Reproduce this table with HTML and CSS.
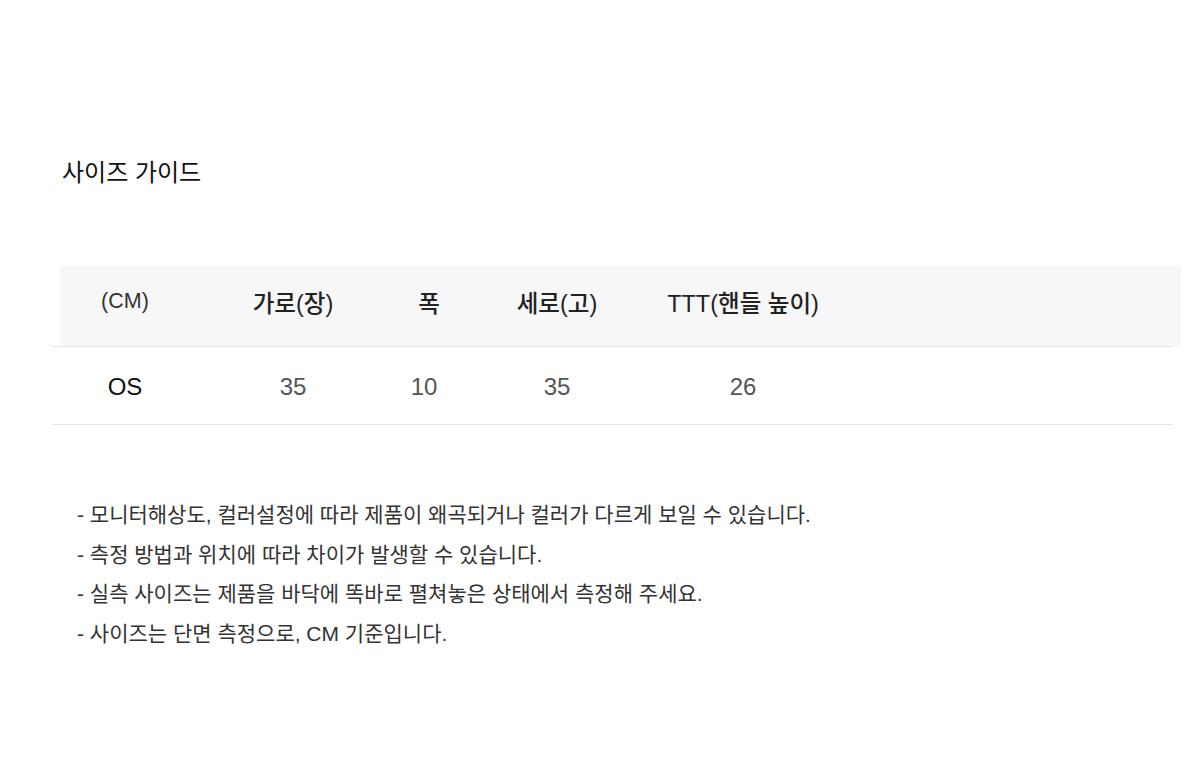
FILE: index.html
```html
<!DOCTYPE html>
<html lang="ko">
<head>
<meta charset="utf-8">
<title>사이즈 가이드</title>
<link rel="stylesheet" href="styles.css">
</head>
<body>
<main class="guide">
  <h1 class="title">사이즈 가이드</h1>
  <section class="size-table">
    <div class="head">
      <div class="cell unit">(CM)</div>
      <div class="cell">가로(장)</div>
      <div class="cell">폭</div>
      <div class="cell">세로(고)</div>
      <div class="cell">TTT(핸들 높이)</div>
      <div class="cell"></div>
    </div>
    <div class="rule"></div>
    <div class="row">
      <div class="cell size">OS</div>
      <div class="cell num">35</div>
      <div class="cell num">10</div>
      <div class="cell num">35</div>
      <div class="cell num">26</div>
      <div class="cell"></div>
    </div>
    <div class="rule"></div>
  </section>
  <ul class="notes">
    <li>- 모니터해상도, 컬러설정에 따라 제품이 왜곡되거나 컬러가 다르게 보일 수 있습니다.</li>
    <li>- 측정 방법과 위치에 따라 차이가 발생할 수 있습니다.</li>
    <li>- 실측 사이즈는 제품을 바닥에 똑바로 펼쳐놓은 상태에서 측정해 주세요.</li>
    <li>- 사이즈는 단면 측정으로, CM 기준입니다.</li>
  </ul>
</main>
</body>
</html>
```

FILE: styles.css
```css
* {
  box-sizing: border-box;
}

html, body {
  margin: 0;
  padding: 0;
  background: #ffffff;
}

body {
  font-family: "Liberation Sans", "Noto Sans CJK KR", sans-serif;
  color: #333333;
  width: 1200px;
  height: 762px;
  overflow: hidden;
}

.guide {
  padding-top: 158px;
}

.title {
  margin: 0 0 0 62px;
  font-size: 24px;
  line-height: 30px;
  font-weight: 400;
  color: #111111;
}

.size-table {
  margin: 78px 0 0 52px;
  width: 1121px;
}

.head {
  display: grid;
  grid-template-columns: 130px 206px 66px 190px 182px 1fr;
  align-items: center;
  height: 80px;
  margin-left: 8px;
  margin-right: -8px;
  padding-bottom: 9px;
  background: #f7f7f7;
  font-size: 23.5px;
  font-weight: 500;
  color: #222222;
}

.head .unit {
  font-size: 21.5px;
  font-weight: 400;
  color: #333333;
}

.rule {
  height: 1px;
  background: #e6e6e6;
}

.row {
  display: grid;
  grid-template-columns: 146px 190px 72px 194px 178px 1fr;
  align-items: center;
  height: 77px;
  padding-top: 3px;
  font-size: 24px;
}

.cell {
  text-align: center;
  white-space: nowrap;
}

.size {
  color: #111111;
}

.num {
  color: #555555;
}

.notes {
  list-style: none;
  margin: 70px 0 0 77px;
  padding: 0;
  font-size: 21px;
  line-height: 39.7px;
  color: #333333;
}
```
